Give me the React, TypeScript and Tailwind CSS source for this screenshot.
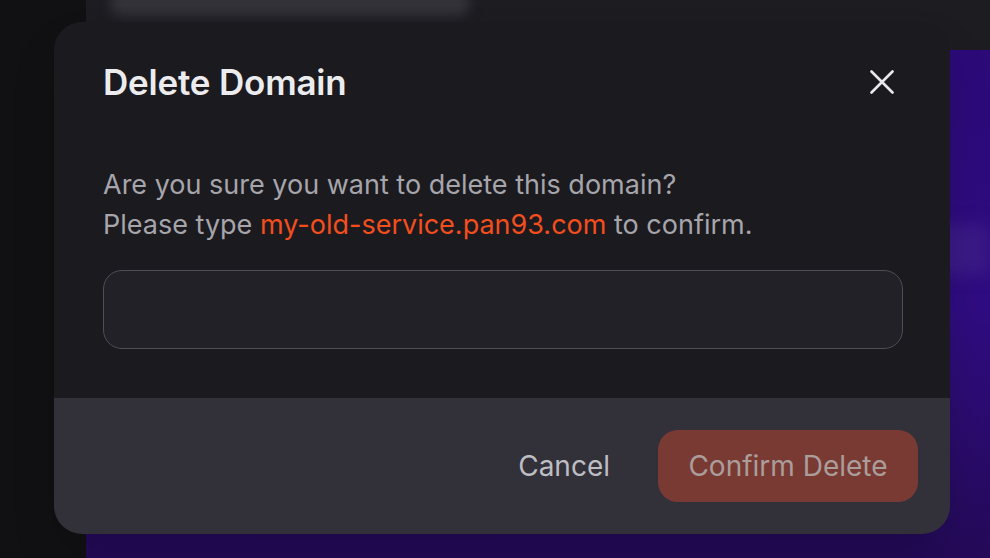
import React, { useState } from 'react';

const DOMAIN = 'my-old-service.pan93.com';

function CloseIcon() {
  return (
    <svg width="24" height="24" viewBox="0 0 24 24" fill="none" stroke="currentColor" strokeWidth="2.6" strokeLinecap="round">
      <path d="M1.5 1.5L22.5 22.5M22.5 1.5L1.5 22.5" />
    </svg>
  );
}

export default function App() {
  const [value, setValue] = useState('');

  return (
    <div className="relative w-[990px] h-[558px] overflow-hidden bg-[#1c1b20] flex font-['Inter',sans-serif]">
      {/* Backdrop: sidebar + page content behind the dialog */}
      <aside className="w-[86px] h-full bg-[#111113]" />
      <div className="flex-1 flex flex-col">
        <div className="h-[50px] bg-[#1d1c21] relative">
          <div className="absolute left-[24px] top-[-10px] w-[360px] h-[26px] rounded-full bg-[#34333a] blur-[6px]" />
        </div>
        <div className="flex-1 bg-gradient-to-b from-[#2c0a78] via-[#300c82] to-[#240a58] flex flex-col">
          <div className="h-[175px]" />
          <div className="h-[50px] bg-[#3a1a86] blur-[8px]" />
          <div className="flex-1" />
        </div>
      </div>

      {/* Dialog */}
      <div className="absolute left-[54px] top-[22px] w-[896px] h-[512px] rounded-[28px] overflow-hidden flex flex-col shadow-2xl">
        <div className="flex-1 bg-[#1b1a1f] flex flex-col px-[49px] pt-[40px]">
          <div className="flex items-center justify-between h-[40px]">
            <h2 className="text-[35px] font-semibold text-[#ececef] tracking-[-0.2px]">Delete Domain</h2>
            <button className="text-[#e9e9ec] mr-[7px]" aria-label="Close">
              <CloseIcon />
            </button>
          </div>
          <div className="mt-[63px] text-[27px] leading-[40px] text-[#a6a5ab]">
            <p>Are you sure you want to delete this domain?</p>
            <p>
              Please type <span className="text-[#f24e1e]">{DOMAIN}</span> to confirm.
            </p>
          </div>
          <input
            value={value}
            onChange={(e) => setValue(e.target.value)}
            className="mt-[25px] w-[800px] h-[79px] rounded-[19px] border-[1.5px] border-[#4f4e55] bg-[#222127] px-5 text-[24px] text-[#ececef] outline-none"
          />
        </div>
        <div className="h-[136px] shrink-0 bg-[#323139] flex items-center justify-end gap-[48px] pr-[32px]">
          <button className="text-[28px] text-[#bebdc2]">Cancel</button>
          <button
            disabled={value !== DOMAIN}
            className="w-[260px] h-[72px] rounded-[20px] bg-[#7a3a34] text-[28px] text-[#aa9d9a]"
          >
            Confirm Delete
          </button>
        </div>
      </div>
    </div>
  );
}
